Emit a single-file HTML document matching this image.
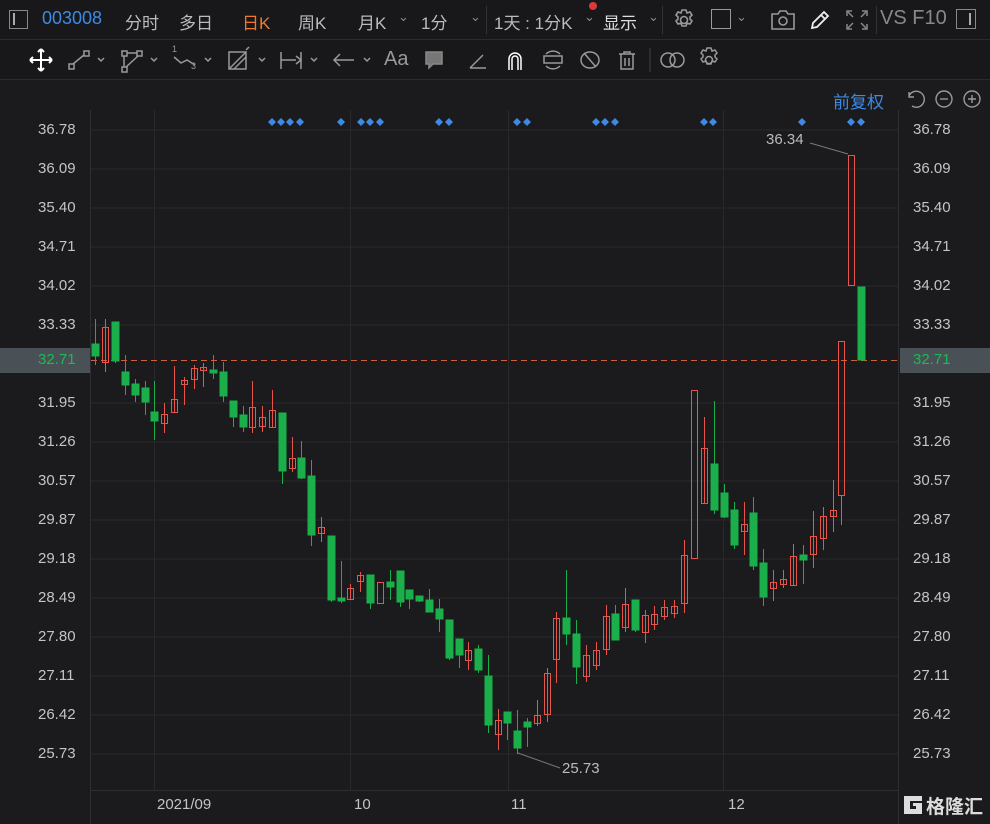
<!DOCTYPE html>
<html><head><meta charset="utf-8"><style>
body{margin:0;width:990px;height:824px;background:#1b1b1d;overflow:hidden;font-family:"Liberation Sans","Noto Sans CJK SC",sans-serif;color:#b8b8b8;position:relative}
.t{position:absolute;white-space:nowrap}
.l,.r{position:absolute;font-size:15px;line-height:18px;color:#c4c4c4}
.l{left:38px}.r{left:913px}
</style></head><body>
<div style="position:absolute;left:0;top:0;width:990px;height:39px;background:#18181a;border-bottom:1px solid #2c2c2e"></div>
<div class="t" style="left:9px;top:10px;width:19px;height:19px;border:1.5px solid #888;box-sizing:border-box"></div>
<div class="t" style="left:13px;top:13px;width:1.5px;height:12px;background:#aaa"></div>
<div class="t" style="left:42px;top:8px;font-size:18px;color:#3d8ae6">003008</div>
<div class="t" style="left:125px;top:9px;font-size:17px;color:#bbb">分时</div>
<div class="t" style="left:179px;top:9px;font-size:17px;color:#bbb">多日</div>
<div class="t" style="left:242px;top:9px;font-size:17px;color:#f07a2c">日K</div>
<div class="t" style="left:298px;top:9px;font-size:17px;color:#bbb">周K</div>
<div class="t" style="left:358px;top:9px;font-size:17px;color:#bbb">月K</div>
<div class="t" style="left:398px;top:9px;font-size:13px;color:#888">⌄</div>
<div class="t" style="left:421px;top:9px;font-size:17px;color:#bbb">1分</div>
<div class="t" style="left:470px;top:9px;font-size:13px;color:#888">⌄</div>
<div class="t" style="left:486px;top:6px;width:1px;height:28px;background:#333"></div>
<div class="t" style="left:494px;top:9px;font-size:17px;color:#bbb">1天 : 1分K</div>
<div class="t" style="left:584px;top:9px;font-size:13px;color:#888">⌄</div>
<div class="t" style="left:589px;top:2px;width:8px;height:8px;border-radius:50%;background:#d83a3a"></div>
<div class="t" style="left:603px;top:9px;font-size:17px;color:#ddd">显示</div>
<div class="t" style="left:648px;top:9px;font-size:13px;color:#888">⌄</div>
<div class="t" style="left:662px;top:6px;width:1px;height:28px;background:#333"></div>
<svg class="t" style="left:672px;top:8px" width="24" height="24" viewBox="0 0 24 24" fill="none" stroke="#999" stroke-width="1.6"><path d="M10 2h4l1 3 3-1 2 3-2 2 0 2 2 2-2 3-3-1-1 3h-4l-1-3-3 1-2-3 2-2v-2L4 7l2-3 3 1z"/><circle cx="12" cy="12" r="3.5"/></svg>
<div class="t" style="left:711px;top:9px;width:20px;height:20px;border:1.5px solid #999;box-sizing:border-box"></div>
<div class="t" style="left:736px;top:9px;font-size:13px;color:#888">⌄</div>
<svg class="t" style="left:770px;top:9px" width="26" height="22" viewBox="0 0 26 22" fill="none" stroke="#999" stroke-width="1.6"><path d="M2 5h6l2-3h6l2 3h6v15H2z"/><circle cx="13" cy="12" r="4"/></svg>
<svg class="t" style="left:808px;top:8px" width="24" height="24" viewBox="0 0 24 24" fill="none" stroke="#eee" stroke-width="1.8"><path d="M4 20l1-5L16 4l4 4L9 19z M13 7l4 4"/></svg>
<svg class="t" style="left:845px;top:9px" width="24" height="22" viewBox="0 0 24 22" fill="none" stroke="#888" stroke-width="1.5"><path d="M2 7V2h5M17 2h5v5M22 15v5h-5M7 20H2v-5M3 3l5 5M21 3l-5 5M21 19l-5-5M3 19l5-5"/></svg>
<div class="t" style="left:876px;top:6px;width:1px;height:28px;background:#333"></div>
<div class="t" style="left:880px;top:7px;font-size:20px;color:#888">VS F10</div>
<div class="t" style="left:956px;top:9px;width:20px;height:20px;border:1.5px solid #888;box-sizing:border-box"></div>
<div class="t" style="left:969px;top:13px;width:1.5px;height:12px;background:#aaa"></div>
<div style="position:absolute;left:0;top:40px;width:990px;height:39px;background:#18181a;border-bottom:1px solid #2c2c2e"></div>
<svg class="t" style="left:0;top:40px" width="740" height="40" viewBox="0 0 740 40" fill="none" stroke="#999" stroke-width="1.5">
<path d="M41 9v22M30 20h22M41 9l-3 3M41 9l3 3M41 31l-3-3M41 31l3-3M30 20l3-3M30 20l3 3M52 20l-3-3M52 20l-3 3" stroke="#fff" stroke-width="2"/>
<rect x="69" y="24" width="5" height="5"/><rect x="84" y="11" width="5" height="5"/><path d="M73 24l11-9"/><path d="M98 18l3 3 3-3"/>
<rect x="122" y="11" width="5" height="5"/><rect x="137" y="11" width="5" height="5"/><rect x="122" y="27" width="5" height="5"/><path d="M127 13h10M124 16v11M126 27l12-11"/><path d="M151 18l3 3 3-3"/>
<path d="M174 17l7 6 6-3 8 5"/><path d="M205 18l3 3 3-3"/>
<rect x="229" y="12" width="17" height="17"/><path d="M229 29l17-17M234 29l12-12M246 10l3-3"/><path d="M259 18l3 3 3-3"/>
<path d="M281 12v17M301 12v17M281 20h15M296 16l5 4-5 4" /><path d="M311 18l3 3 3-3"/>
<path d="M334 20h20M340 14l-6 6 6 6"/><path d="M364 18l3 3 3-3"/>
<path d="M426 12h16v12h-9l-4 4v-4h-3z" fill="#777" stroke="#888"/>
<path d="M470 28l13-13M470 28h16"/>
<path d="M509 30V19a6 6 0 0 1 12 0v11M512 30V19a3 3 0 0 1 6 0v11" stroke="#fff"/>
<rect x="544" y="16" width="18" height="7"/><path d="M546 14a10 10 0 0 1 14 0M546 26a10 10 0 0 0 14 0"/>
<ellipse cx="590" cy="20" rx="9" ry="8"/><path d="M584 13l12 14"/>
<path d="M619 14h16M624 14v-2h6v2M621 14v15h12V14M625 18v8M629 18v8"/>
<path d="M650 8v24" stroke="#333"/>
<circle cx="668" cy="20" r="7"/><circle cx="677" cy="20" r="7"/>
<path d="M707 8h4l1 3 3-1 2 3-2 2v2l2 2-2 3-3-1-1 3h-4l-1-3-3 1-2-3 2-2v-2l-2-2 2-3 3 1z"/><circle cx="709" cy="20" r="3.5"/>
</svg>
<div class="t" style="left:172px;top:44px;font-size:9px;color:#999">1</div>
<div class="t" style="left:191px;top:61px;font-size:9px;color:#999">3</div>
<div class="t" style="left:384px;top:48px;font-size:20px;color:#999">Aa</div>
<div class="t" style="left:833px;top:88px;font-size:17px;color:#3d8ae6">前复权</div>
<svg class="t" style="left:904px;top:88px" width="84" height="22" viewBox="0 0 84 22" fill="none" stroke="#999" stroke-width="1.4"><path d="M5 4v5h5M5 8a8 8 0 1 1 3 10"/><circle cx="40" cy="11" r="8"/><path d="M36 11h8"/><circle cx="68" cy="11" r="8"/><path d="M64 11h8M68 7v8"/></svg>

<svg class="t" style="left:0;top:0" width="990" height="824">
<line x1="90.5" y1="110" x2="90.5" y2="824" stroke="#2e2e30"/>
<line x1="898.5" y1="110" x2="898.5" y2="824" stroke="#2e2e30"/>
<line x1="90" y1="790.5" x2="898" y2="790.5" stroke="#2e2e30"/>
<g stroke="#29292b">
<line x1="91" y1="130" x2="898" y2="130"/><line x1="91" y1="169" x2="898" y2="169"/><line x1="91" y1="208" x2="898" y2="208"/><line x1="91" y1="247" x2="898" y2="247"/><line x1="91" y1="286" x2="898" y2="286"/><line x1="91" y1="325" x2="898" y2="325"/><line x1="91" y1="403" x2="898" y2="403"/><line x1="91" y1="442" x2="898" y2="442"/><line x1="91" y1="481" x2="898" y2="481"/><line x1="91" y1="520" x2="898" y2="520"/><line x1="91" y1="559" x2="898" y2="559"/><line x1="91" y1="598" x2="898" y2="598"/><line x1="91" y1="637" x2="898" y2="637"/><line x1="91" y1="676" x2="898" y2="676"/><line x1="91" y1="715" x2="898" y2="715"/><line x1="91" y1="754" x2="898" y2="754"/>
<line x1="154.5" y1="110" x2="154.5" y2="790"/><line x1="350.5" y1="110" x2="350.5" y2="790"/><line x1="508.5" y1="110" x2="508.5" y2="790"/><line x1="723.5" y1="110" x2="723.5" y2="790"/>
</g>
<line x1="91" y1="360.5" x2="898" y2="360.5" stroke="#d0603a" stroke-dasharray="6,4"/>
<g fill="#3d8ae6">
<g id="d"><path d="M272 118l4 4-4 4-4-4z"/></g>
<use href="#d" x="9"/><use href="#d" x="18"/><use href="#d" x="28"/><use href="#d" x="69"/><use href="#d" x="89"/><use href="#d" x="98"/><use href="#d" x="108"/><use href="#d" x="167"/><use href="#d" x="177"/><use href="#d" x="245"/><use href="#d" x="255"/><use href="#d" x="324"/><use href="#d" x="333"/><use href="#d" x="343"/><use href="#d" x="432"/><use href="#d" x="441"/><use href="#d" x="530"/><use href="#d" x="579"/><use href="#d" x="589"/>
</g>
<g stroke-width="1">
<g stroke="#1aaf4b" fill="#1aaf4b">
<line x1="95.5" y1="319" x2="95.5" y2="365"/><rect x="92" y="344" width="7" height="12"/>
<line x1="115.5" y1="322" x2="115.5" y2="363"/><rect x="112" y="322" width="7" height="39"/>
<line x1="125.5" y1="355" x2="125.5" y2="395"/><rect x="122" y="372" width="7" height="13"/>
<line x1="135.5" y1="379" x2="135.5" y2="402"/><rect x="132" y="384" width="7" height="11"/>
<line x1="145.5" y1="381" x2="145.5" y2="415"/><rect x="142" y="388" width="7" height="14"/>
<line x1="154.5" y1="381" x2="154.5" y2="440"/><rect x="151" y="412" width="7" height="9"/>
<line x1="213.5" y1="355" x2="213.5" y2="379"/><rect x="210" y="370" width="7" height="3"/>
<line x1="223.5" y1="362" x2="223.5" y2="402"/><rect x="220" y="372" width="7" height="24"/>
<line x1="233.5" y1="401" x2="233.5" y2="427"/><rect x="230" y="401" width="7" height="16"/>
<line x1="243.5" y1="406" x2="243.5" y2="432"/><rect x="240" y="415" width="7" height="12"/>
<line x1="282.5" y1="413" x2="282.5" y2="484"/><rect x="279" y="413" width="7" height="58"/>
<line x1="301.5" y1="441" x2="301.5" y2="479"/><rect x="298" y="458" width="7" height="20"/>
<line x1="311.5" y1="460" x2="311.5" y2="546"/><rect x="308" y="476" width="7" height="59"/>
<line x1="331.5" y1="536" x2="331.5" y2="602"/><rect x="328" y="536" width="7" height="64"/>
<line x1="341.5" y1="561" x2="341.5" y2="603"/><rect x="338" y="598" width="7" height="3"/>
<line x1="370.5" y1="575" x2="370.5" y2="609"/><rect x="367" y="575" width="7" height="28"/>
<line x1="390.5" y1="570" x2="390.5" y2="600"/><rect x="387" y="582" width="7" height="5"/>
<line x1="400.5" y1="571" x2="400.5" y2="607"/><rect x="397" y="571" width="7" height="31"/>
<line x1="409.5" y1="590" x2="409.5" y2="609"/><rect x="406" y="590" width="7" height="9"/>
<line x1="419.5" y1="596" x2="419.5" y2="602"/><rect x="416" y="596" width="7" height="5"/>
<line x1="429.5" y1="589" x2="429.5" y2="612"/><rect x="426" y="600" width="7" height="12"/>
<line x1="439.5" y1="599" x2="439.5" y2="632"/><rect x="436" y="609" width="7" height="10"/>
<line x1="449.5" y1="620" x2="449.5" y2="660"/><rect x="446" y="620" width="7" height="38"/>
<line x1="459.5" y1="639" x2="459.5" y2="668"/><rect x="456" y="639" width="7" height="16"/>
<line x1="478.5" y1="645" x2="478.5" y2="673"/><rect x="475" y="649" width="7" height="21"/>
<line x1="488.5" y1="655" x2="488.5" y2="733"/><rect x="485" y="676" width="7" height="49"/>
<line x1="507.5" y1="712" x2="507.5" y2="740"/><rect x="504" y="712" width="7" height="11"/>
<line x1="517.5" y1="710" x2="517.5" y2="754"/><rect x="514" y="731" width="7" height="17"/>
<line x1="527.5" y1="718" x2="527.5" y2="747"/><rect x="524" y="722" width="7" height="5"/>
<line x1="566.5" y1="570" x2="566.5" y2="645"/><rect x="563" y="618" width="7" height="16"/>
<line x1="576.5" y1="620" x2="576.5" y2="684"/><rect x="573" y="634" width="7" height="33"/>
<line x1="615.5" y1="605" x2="615.5" y2="640"/><rect x="612" y="614" width="7" height="26"/>
<line x1="635.5" y1="600" x2="635.5" y2="632"/><rect x="632" y="600" width="7" height="30"/>
<line x1="714.5" y1="401" x2="714.5" y2="514"/><rect x="711" y="464" width="7" height="46"/>
<line x1="724.5" y1="484" x2="724.5" y2="518"/><rect x="721" y="493" width="7" height="24"/>
<line x1="734.5" y1="502" x2="734.5" y2="549"/><rect x="731" y="510" width="7" height="35"/>
<line x1="753.5" y1="497" x2="753.5" y2="570"/><rect x="750" y="513" width="7" height="53"/>
<line x1="763.5" y1="549" x2="763.5" y2="606"/><rect x="760" y="563" width="7" height="34"/>
<line x1="803.5" y1="545" x2="803.5" y2="584"/><rect x="800" y="555" width="7" height="5"/>
<rect x="858" y="287" width="7" height="73"/>
</g>
<g stroke="#e8534a" fill="none">
<line x1="105.5" y1="319" x2="105.5" y2="372"/><rect x="102.5" y="327.5" width="6" height="35"/>
<line x1="164.5" y1="403" x2="164.5" y2="433"/><rect x="161.5" y="414.5" width="6" height="9"/>
<line x1="174.5" y1="366" x2="174.5" y2="413"/><rect x="171.5" y="399.5" width="6" height="13"/>
<line x1="184.5" y1="377" x2="184.5" y2="405"/><rect x="181.5" y="380.5" width="6" height="4"/>
<line x1="194.5" y1="365" x2="194.5" y2="389"/><rect x="191.5" y="368.5" width="6" height="11"/>
<line x1="203.5" y1="363" x2="203.5" y2="387"/><rect x="200.5" y="367.5" width="6" height="3"/>
<line x1="252.5" y1="381" x2="252.5" y2="433"/><rect x="249.5" y="407.5" width="6" height="20"/>
<line x1="262.5" y1="406" x2="262.5" y2="432"/><rect x="259.5" y="417.5" width="6" height="9"/>
<line x1="272.5" y1="390" x2="272.5" y2="428"/><rect x="269.5" y="410.5" width="6" height="17"/>
<line x1="292.5" y1="437" x2="292.5" y2="472"/><rect x="289.5" y="458.5" width="6" height="10"/>
<line x1="321.5" y1="517" x2="321.5" y2="542"/><rect x="318.5" y="527.5" width="6" height="6"/>
<line x1="350.5" y1="584" x2="350.5" y2="600"/><rect x="347.5" y="588.5" width="6" height="11"/>
<line x1="360.5" y1="572" x2="360.5" y2="592"/><rect x="357.5" y="575.5" width="6" height="6"/>
<rect x="377.5" y="582.5" width="6" height="21"/>
<line x1="468.5" y1="642" x2="468.5" y2="670"/><rect x="465.5" y="650.5" width="6" height="10"/>
<line x1="498.5" y1="709" x2="498.5" y2="750"/><rect x="495.5" y="720.5" width="6" height="14"/>
<line x1="537.5" y1="700" x2="537.5" y2="726"/><rect x="534.5" y="715.5" width="6" height="8"/>
<line x1="547.5" y1="668" x2="547.5" y2="722"/><rect x="544.5" y="673.5" width="6" height="41"/>
<line x1="556.5" y1="612" x2="556.5" y2="683"/><rect x="553.5" y="618.5" width="6" height="41"/>
<line x1="586.5" y1="645" x2="586.5" y2="682"/><rect x="583.5" y="655.5" width="6" height="21"/>
<line x1="596.5" y1="642" x2="596.5" y2="670"/><rect x="593.5" y="650.5" width="6" height="15"/>
<line x1="606.5" y1="605" x2="606.5" y2="655"/><rect x="603.5" y="616.5" width="6" height="33"/>
<line x1="625.5" y1="588" x2="625.5" y2="632"/><rect x="622.5" y="604.5" width="6" height="23"/>
<line x1="645.5" y1="610" x2="645.5" y2="643"/><rect x="642.5" y="615.5" width="6" height="17"/>
<line x1="654.5" y1="606" x2="654.5" y2="630"/><rect x="651.5" y="614.5" width="6" height="10"/>
<line x1="664.5" y1="600" x2="664.5" y2="620"/><rect x="661.5" y="607.5" width="6" height="9"/>
<line x1="674.5" y1="600" x2="674.5" y2="618"/><rect x="671.5" y="606.5" width="6" height="7"/>
<line x1="684.5" y1="540" x2="684.5" y2="613"/><rect x="681.5" y="555.5" width="6" height="48"/>
<rect x="691.5" y="390.5" width="6" height="168"/>
<line x1="704.5" y1="417" x2="704.5" y2="503"/><rect x="701.5" y="448.5" width="6" height="55"/>
<line x1="744.5" y1="502" x2="744.5" y2="555"/><rect x="741.5" y="524.5" width="6" height="7"/>
<line x1="773.5" y1="570" x2="773.5" y2="601"/><rect x="770.5" y="582.5" width="6" height="6"/>
<line x1="783.5" y1="570" x2="783.5" y2="588"/><rect x="780.5" y="579.5" width="6" height="5"/>
<line x1="793.5" y1="544" x2="793.5" y2="585"/><rect x="790.5" y="556.5" width="6" height="29"/>
<line x1="813.5" y1="511" x2="813.5" y2="568"/><rect x="810.5" y="536.5" width="6" height="18"/>
<line x1="823.5" y1="507" x2="823.5" y2="550"/><rect x="820.5" y="516.5" width="6" height="22"/>
<line x1="833.5" y1="480" x2="833.5" y2="532"/><rect x="830.5" y="510.5" width="6" height="6"/>
<line x1="841.5" y1="495" x2="841.5" y2="525"/><rect x="838.5" y="341.5" width="6" height="154"/>
<rect x="848.5" y="155.5" width="6" height="130"/>
</g>
</g>
<line x1="810" y1="143" x2="848" y2="154" stroke="#777"/>
<line x1="518" y1="753" x2="560" y2="768" stroke="#777"/>
</svg>
<div class="t" style="left:766px;top:131px;font-size:15px;color:#bbb">36.34</div>
<div class="t" style="left:562px;top:760px;font-size:15px;color:#bbb">25.73</div>
<div class="t" style="left:0;top:348px;width:90px;height:25px;background:#4a5156"></div>
<div class="t" style="left:900px;top:348px;width:90px;height:25px;background:#4a5156"></div>
<div class="l" style="top:121px">36.78</div><div class="r" style="top:121px">36.78</div>
<div class="l" style="top:160px">36.09</div><div class="r" style="top:160px">36.09</div>
<div class="l" style="top:199px">35.40</div><div class="r" style="top:199px">35.40</div>
<div class="l" style="top:238px">34.71</div><div class="r" style="top:238px">34.71</div>
<div class="l" style="top:277px">34.02</div><div class="r" style="top:277px">34.02</div>
<div class="l" style="top:316px">33.33</div><div class="r" style="top:316px">33.33</div>
<div class="l" style="top:351px;color:#1db954">32.71</div><div class="r" style="top:351px;color:#1db954">32.71</div>
<div class="l" style="top:394px">31.95</div><div class="r" style="top:394px">31.95</div>
<div class="l" style="top:433px">31.26</div><div class="r" style="top:433px">31.26</div>
<div class="l" style="top:472px">30.57</div><div class="r" style="top:472px">30.57</div>
<div class="l" style="top:511px">29.87</div><div class="r" style="top:511px">29.87</div>
<div class="l" style="top:550px">29.18</div><div class="r" style="top:550px">29.18</div>
<div class="l" style="top:589px">28.49</div><div class="r" style="top:589px">28.49</div>
<div class="l" style="top:628px">27.80</div><div class="r" style="top:628px">27.80</div>
<div class="l" style="top:667px">27.11</div><div class="r" style="top:667px">27.11</div>
<div class="l" style="top:706px">26.42</div><div class="r" style="top:706px">26.42</div>
<div class="l" style="top:745px">25.73</div><div class="r" style="top:745px">25.73</div>
<div class="t" style="left:157px;top:796px;font-size:15px;color:#c4c4c4">2021/09</div>
<div class="t" style="left:354px;top:796px;font-size:15px;color:#c4c4c4">10</div>
<div class="t" style="left:511px;top:796px;font-size:15px;color:#c4c4c4">11</div>
<div class="t" style="left:728px;top:796px;font-size:15px;color:#c4c4c4">12</div>
<svg class="t" style="left:902px;top:794px" width="22" height="22" viewBox="0 0 22 22"><path d="M2 2h18v5H8v8h6v-3h-3V9h9v11H2z" fill="#ddd"/></svg>
<div class="t" style="left:926px;top:792px;font-size:19px;color:#ddd;font-weight:bold">格隆汇</div>
</body></html>
